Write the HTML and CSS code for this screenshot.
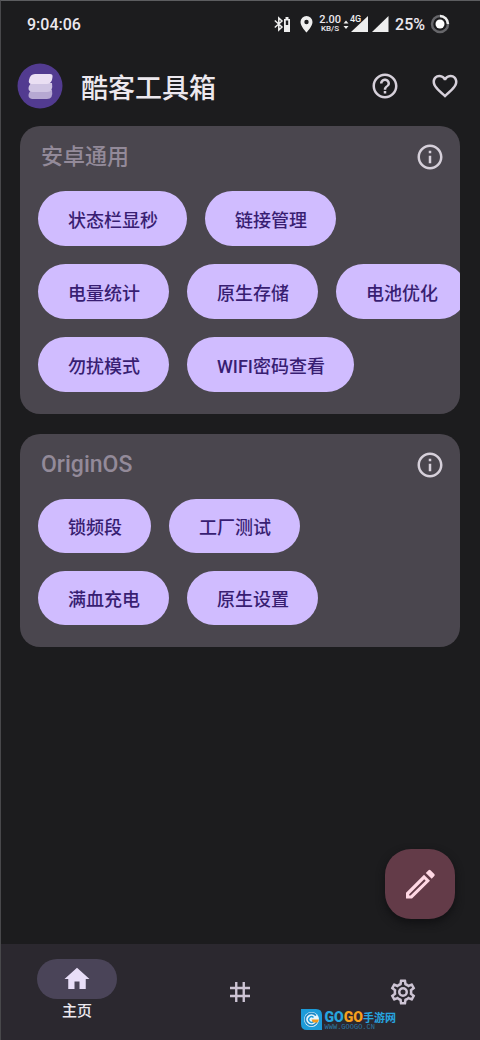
FILE: index.html
```html
<!DOCTYPE html>
<html lang="zh-CN">
<head>
<meta charset="utf-8">
<meta name="viewport" content="width=device-width, initial-scale=1">
<title>酷客工具箱</title>
<link rel="stylesheet" href="styles.css">
</head>
<body>
<div class="app">
  <div class="status">
    <time class="clock">9:04:06</time>
    <div class="indicators">
      <svg class="bt" width="17" height="18" viewBox="0 0 17 18"><path d="M.8 5.500 8 12 4.800 15V3L8 6 .8 12.500" fill="none" stroke="#eee" stroke-width="1.500"/><path d="M10 4h1.500V2h3v2H16v13h-6z" fill="#eee"/><path d="M11.800 5.500h2.400V10h-2.400z" fill="#1c1c1e"/></svg>
      <svg class="pin" width="13" height="17" viewBox="0 0 13 17"><path fill="#eee" fill-rule="evenodd" d="M6.500 0A6 6 0 0 0 .5 6c0 4.500 6 10.500 6 10.500s6-6 6-10.500a6 6 0 0 0-6-6zm0 3.800a2.200 2.200 0 1 1 0 4.400 2.200 2.200 0 0 1 0-4.400z"/></svg>
      <span class="speed"><b>2.00</b><small>KB/S</small></span>
      <svg class="signal" width="28" height="20" viewBox="0 0 28 20"><path fill="#eee" d="M4 7.500 6.500 10.500h-5zM4 16 1.500 13h5zM26 3v16H9z"/><path d="M7 0h11v9.500H7z" fill="#1c1c1e"/><text class="net" x="8" y="9">4G</text></svg>
      <svg class="signal2" width="17" height="20" viewBox="0 0 17 20"><path fill="#eee" d="M16.500 3v16H0z"/></svg>
      <span class="percent">25%</span>
      <svg width="20" height="20" viewBox="0 0 20 20"><circle cx="10" cy="10" r="8" fill="none" stroke="#66666a" stroke-width="2.500"/><path d="M10 2a8 8 0 0 1 8 8" fill="none" stroke="#eee" stroke-width="2.500"/><circle cx="10" cy="10" r="4.500" fill="#fff"/></svg>
    </div>
  </div>

  <header class="bar">
    <svg class="logo" width="46" height="46" viewBox="0 0 46 46"><circle cx="23" cy="23" r="22.500" fill="#523b90"/><path d="M14 27h21q1.500 9-5 9H15q-5-1-3-6z" fill="#b6a8d2"/><path d="M14 20h21q1.500 9-5 9H15q-5-1-3-6z" fill="#cfc4e3"/><path d="M18 11h15q3 0 2.500 3-.5 7-5.500 7H14q-3-1-2-4 1-6 6-6z" fill="#eadff3"/></svg>
    <h1>酷客工具箱</h1>
    <button class="icon" aria-label="帮助"><svg width="30" height="30" viewBox="0 0 24 24"><path d="M11 18h2v-2h-2v2zm1-16C6.480 2 2 6.480 2 12s4.480 10 10 10 10-4.480 10-10S17.520 2 12 2zm0 18c-4.410 0-8-3.590-8-8s3.590-8 8-8 8 3.590 8 8-3.590 8-8 8zm0-14c-2.210 0-4 1.790-4 4h2c0-1.100.9-2 2-2s2 .9 2 2c0 2-3 1.750-3 5h2c0-2.250 3-2.500 3-5 0-2.210-1.790-4-4-4z"/></svg></button>
    <button class="icon" aria-label="收藏"><svg width="30" height="30" viewBox="0 0 24 24"><path d="M16.500 3c-1.740 0-3.410.81-4.500 2.090C10.910 3.810 9.240 3 7.500 3 4.420 3 2 5.420 2 8.500c0 3.780 3.400 6.860 8.550 11.540L12 21.350l1.450-1.320C18.600 15.360 22 12.280 22 8.500 22 5.420 19.580 3 16.500 3zm-4.400 15.550-.1.100-.1-.1C7.140 14.240 4 11.390 4 8.500 4 6.500 5.500 5 7.500 5c1.540 0 3.040.99 3.570 2.360h1.870C13.460 5.990 14.960 5 16.500 5c2 0 3.500 1.500 3.500 3.500 0 2.890-3.140 5.740-7.900 10.050z"/></svg></button>
  </header>

  <main class="cards">
    <section class="card">
      <div class="head">
        <h2>安卓通用</h2>
        <button class="icon" aria-label="说明"><svg width="30" height="30" viewBox="0 0 24 24"><path d="M11 7h2v2h-2zm0 4h2v6h-2zm1-9C6.480 2 2 6.480 2 12s4.480 10 10 10 10-4.480 10-10S17.520 2 12 2zm0 18c-4.410 0-8-3.590-8-8s3.590-8 8-8 8 3.590 8 8-3.590 8-8 8z"/></svg></button>
      </div>
      <div class="row tall"><button class="chip">状态栏显秒</button><button class="chip">链接管理</button></div>
      <div class="row tall"><button class="chip">电量统计</button><button class="chip">原生存储</button><button class="chip">电池优化</button></div>
      <div class="row tall"><button class="chip">勿扰模式</button><button class="chip">WIFI密码查看</button></div>
    </section>
    <section class="card">
      <div class="head">
        <h2 class="latin">OriginOS</h2>
        <button class="icon" aria-label="说明"><svg width="30" height="30" viewBox="0 0 24 24"><path d="M11 7h2v2h-2zm0 4h2v6h-2zm1-9C6.480 2 2 6.480 2 12s4.480 10 10 10 10-4.480 10-10S17.520 2 12 2zm0 18c-4.410 0-8-3.590-8-8s3.590-8 8-8 8 3.590 8 8-3.590 8-8 8z"/></svg></button>
      </div>
      <div class="row"><button class="chip">锁频段</button><button class="chip">工厂测试</button></div>
      <div class="row"><button class="chip">满血充电</button><button class="chip">原生设置</button></div>
    </section>
  </main>

  <button class="fab" aria-label="编辑"><svg width="38" height="38" viewBox="0 0 38 38"><path fill-rule="evenodd" d="M5 27.800 23 9.800l6 6L11 33.500H5zM8.200 29.200v1.300h1.300L24.700 15.700l-1.500-1.500z"/><path d="M24.800 8 27.500 5.300q1-1 2 0l3.800 3.800q1 1 0 2L30.700 13.800z"/></svg></button>

  <nav class="nav">
    <a class="tab active" href="#home"><span class="pill"><svg width="30" height="30" viewBox="0 0 24 24"><path d="M10 20v-6h4v6h5v-8h3L12 3 2 12h3v8z"/></svg></span>主页</a>
    <a class="tab" href="#channels" aria-label="频道"><svg width="30" height="30" viewBox="0 0 24 24"><path d="M9 4v16M15 4v16M4 8.800h16M4 15.200h16" fill="none" stroke="#cdc4d4" stroke-width="1.900"/></svg></a>
    <a class="tab" href="#settings" aria-label="设置"><svg width="30" height="30" viewBox="0 0 24 24"><path d="M19.430 12.980c.04-.32.07-.64.07-.98s-.03-.66-.07-.98l2.110-1.650c.19-.15.24-.42.12-.64l-2-3.460a.5.5 0 0 0-.61-.22l-2.490 1c-.52-.4-1.080-.73-1.690-.98l-.38-2.650A.49.490 0 0 0 14 2h-4c-.25 0-.46.180-.49.420l-.38 2.650c-.61.250-1.170.590-1.690.980l-2.490-1a.5.5 0 0 0-.61.220l-2 3.460c-.13.220-.07.490.12.640l2.110 1.650c-.04.320-.07.650-.07.980s.03.660.07.980l-2.110 1.650c-.19.150-.24.420-.12.640l2 3.460c.12.220.39.300.61.220l2.490-1c.52.400 1.080.730 1.690.980l.38 2.650c.03.240.24.420.49.420h4c.25 0 .46-.18.49-.42l.38-2.650c.61-.25 1.170-.59 1.690-.98l2.490 1c.23.090.49 0 .61-.22l2-3.460c.12-.22.070-.49-.12-.64zm-1.980-1.710c.04.310.05.520.05.730s-.02.430-.05.730l-.14 1.130.89.700 1.080.840-.7 1.210-1.270-.51-1.040-.42-.9.680c-.43.320-.84.560-1.250.730l-1.060.43-.16 1.130-.2 1.350h-1.400l-.19-1.350-.16-1.130-1.060-.43c-.43-.18-.83-.41-1.230-.71l-.91-.7-1.060.43-1.270.51-.7-1.210 1.080-.84.890-.7-.14-1.130c-.03-.31-.05-.54-.05-.74s.02-.43.050-.73l.14-1.130-.89-.7-1.080-.84.7-1.210 1.270.51 1.040.42.900-.68c.43-.32.84-.56 1.250-.73l1.060-.43.160-1.130.2-1.350h1.390l.19 1.350.16 1.130 1.060.43c.43.180.83.410 1.230.71l.91.700 1.060-.43 1.270-.51.7 1.210-1.070.85-.89.700zM12 8a4 4 0 1 0 0 8 4 4 0 0 0 0-8zm0 6a2 2 0 1 1 0-4 2 2 0 0 1 0 4z"/></svg></a>
  </nav>

  <div class="mark">
    <svg width="21" height="21" viewBox="0 0 21 21"><path d="M0 0h15q6 0 6 6v15H6q-6 0-6-6z" fill="#1c9bd8"/><circle cx="10.500" cy="10.500" r="7.500" fill="#e6f5fc"/><path d="M15 6.500a6 6 0 1 0 1 6" fill="none" stroke="#1c86c4" stroke-width="1.600"/><path d="M12.500 8.500a2.800 2.800 0 1 0 0 4" fill="none" stroke="#1c9bd8" stroke-width="1.500"/><path d="M10.500 10.500H18l-1.500 3H12z" fill="#f39a1f"/></svg>
    <div>
      <div class="name"><b>GO</b><b class="orange">GO</b><span>手游网</span></div>
      <div class="site">WWW.GOOGO.CN</div>
    </div>
  </div>
</div>
</body>
</html>
```

FILE: styles.css
```css
* { box-sizing: border-box; }
body {
  margin: 0;
  background: #1c1c1e;
  color: #ece8ee;
  font-family: Roboto, "Noto Sans CJK SC", sans-serif;
}
button { border: 0; padding: 0; background: none; font: inherit; color: inherit; cursor: pointer; }
a { color: inherit; text-decoration: none; }
svg { display: block; flex: none; }
h1, h2 { margin: 0; }

.app {
  position: relative;
  display: flex;
  flex-direction: column;
  min-height: 100vh;
  border-top: 1px solid #5c5d60;
  border-left: 1px solid #48484b;
}

.status {
  display: flex;
  justify-content: space-between;
  align-items: center;
  height: 46px;
  padding: 0 30px 0 26px;
}
.clock { font-size: 16px; font-weight: 500; }
.indicators { display: flex; align-items: center; }
.pin { margin: 0 6px 0 9px; }
.speed { display: flex; flex-direction: column; align-items: center; width: 22px; margin-right: 1px; }
.speed b { font-size: 11px; line-height: 10px; font-weight: 500; }
.speed small { font-size: 8px; line-height: 8px; font-weight: 500; }
.signal, .signal2 { margin-bottom: 3px; }
.signal { margin-right: 2px; }
.net { font: 500 9px Roboto, sans-serif; fill: #eee; }
.percent { margin: 0 5px 0 6px; font-size: 16px; font-weight: 500; }

.bar {
  display: flex;
  align-items: center;
  height: 78px;
  padding: 0 20px 0 16px;
}
.bar h1 { flex: 1; padding-left: 18px; font-size: 27px; font-weight: 500; }
.icon svg { fill: #d6d0da; }
.bar .icon + .icon { margin-left: 30px; }

.cards { display: flex; flex-direction: column; gap: 20px; padding: 1px 20px 0 19px; }
.card {
  display: flex;
  flex-direction: column;
  gap: 18px;
  padding: 15px 0 22px 18px;
  overflow: hidden;
  border-radius: 20px;
  background: #4a464e;
}
.head {
  display: flex;
  align-items: center;
  justify-content: space-between;
  height: 32px;
  padding: 0 15px 0 3px;
}
.head h2 { font-size: 22px; line-height: 30px; font-weight: 500; color: #938a99; }
.head .latin { font-size: 23px; }
.row { display: flex; gap: 18px; height: 54px; }
.tall { height: 55px; }
.chip {
  flex: none;
  padding: 0 29px 0 30px;
  border-radius: 28px;
  background: #d0bcff;
  color: #381e72;
  font-size: 18px;
  font-weight: 500;
  white-space: nowrap;
}

.fab {
  display: grid;
  place-items: center;
  width: 70px;
  height: 70px;
  margin: auto 25px 25px auto;
  border-radius: 26px;
  background: #633b48;
  box-shadow: 0 4px 8px #111113;
}
.fab svg { fill: #ffd8e4; }

.nav {
  display: flex;
  justify-content: space-between;
  height: 96px;
  padding: 0 37px 0 36px;
  background: #2b282f;
}
.tab { display: flex; flex-direction: column; align-items: center; justify-content: center; width: 80px; }
.tab svg { fill: #cdc4d4; }
.active { justify-content: flex-start; padding-top: 15px; font-size: 15px; font-weight: 500; }
.pill {
  display: grid;
  place-items: center;
  width: 80px;
  height: 40px;
  border-radius: 20px;
  background: #4a4458;
}
.active svg { fill: #e8def8; }

.mark { position: absolute; right: 84px; bottom: 9px; display: flex; gap: 3px; }
.name { display: flex; align-items: center; height: 15px; color: #27a5e0; font-size: 11px; font-weight: 700; }
.name b { font-size: 14px; font-weight: 900; }
.name .orange { color: #f8a01c; }
.site { font: 7px/7px "Liberation Mono", monospace; color: #2c78a5; }
```
